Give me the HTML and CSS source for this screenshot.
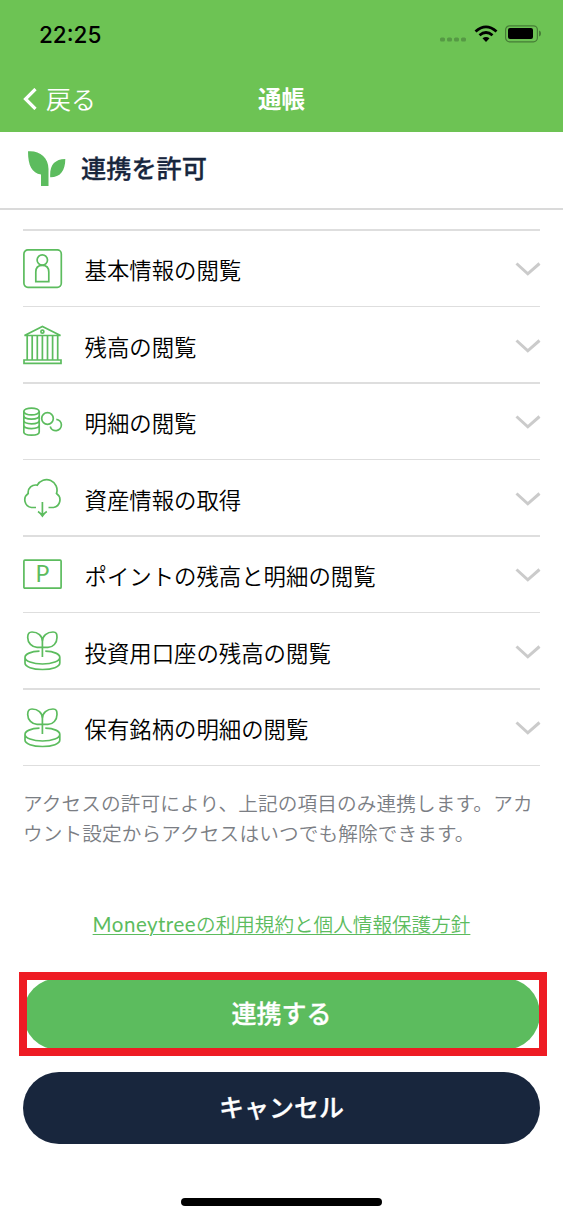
FILE: index.html
```html
<!DOCTYPE html>
<html lang="ja">
<head>
<meta charset="utf-8">
<title>通帳</title>
<link rel="stylesheet" href="styles.css">
</head>
<body>
<svg class="defs" width="0" height="0">
  <symbol id="chevron" viewBox="0 0 26 14"><path d="M1.500 1.500 12.800 11.800 24.500 1.500" fill="none" stroke="#cbcbcb" stroke-width="3"/></symbol>
  <symbol id="plant" viewBox="0 0 40 40">
    <path d="M19.400 26V10.500C19.400 5 15 1 9 1 5.500 1 4.700 3 4.700 6.500 4.700 12 9 16.300 14 16.300H25C30 16.300 34 12 34 6.500 34 3 33.500 1 30 1 24 1 19.400 5 19.400 10.500"/>
    <path d="M16.500 20.200C8 20.500 2 23 2 26.500S9.500 33 19.500 33 36.800 30 36.800 26.500 31 20.500 22.300 20.200M2 26.500V32C2 35.800 9.500 38.500 19.500 38.500S36.800 35.800 36.800 32V26.500"/>
  </symbol>
</svg>
<header class="nav">
  <div class="status">
    <span class="time">22:25</span>
    <div class="signals">
      <svg width="27" height="5" viewBox="0 0 27 5" fill="#559944"><rect width="5" height="4" y=".5" rx="1.500"/><rect x="7" width="5" height="4" y=".5" rx="1.500"/><rect x="14" width="5" height="4" y=".5" rx="1.500"/><rect x="21" width="5" height="4" y=".5" rx="1.500"/></svg>
      <svg class="wifi" width="24" height="18" viewBox="0 0 24 18"><path d="M1.500 6.500Q12-2.800 22.500 6.500M5.500 10.300Q12 4.700 18.500 10.300" fill="none" stroke="#000" stroke-width="2.800"/><path d="M8.500 13.200Q12 10.600 15.500 13.200L12 17Z"/></svg>
      <svg class="battery" width="37" height="18" viewBox="0 0 37 18"><rect x=".6" y=".8" width="31.800" height="16" rx="4" fill="none" stroke="#467d36" stroke-width="1.200"/><rect x="3" y="3" width="25" height="11" rx="2"/><path d="M34 5.500C36.700 6 36.700 11 34 11.500Z" fill="#467d36"/></svg>
    </div>
  </div>
  <div class="bar">
    <a class="back"><svg width="14" height="22" viewBox="0 0 14 22"><path d="M12.500 1 2.500 11 12.500 21" fill="none" stroke="#fff" stroke-width="3.200"/></svg><span>戻る</span></a>
    <h1>通帳</h1>
  </div>
</header>
<section class="heading">
  <svg width="38" height="36" viewBox="0 0 38 36" fill="#5cbc5e"><path d="M0 .3C11-.8 20.500 6 20.500 18V35H13V23.500C4 22 0 15 0 .3ZM37.300 8C26.500 8.300 21.500 14 22.200 26.300 32 26.500 37.300 20 37.300 8Z"/></svg>
  <h2>連携を許可</h2>
</section>
<main>
  <ul class="scopes">
    <li><svg class="icon" viewBox="0 0 40 40"><rect x=".9" y=".9" width="37.400" height="37.400" rx="4"/><circle cx="19.300" cy="11" r="5.200"/><path d="M12.800 32.600V23Q12.800 16.400 19.300 16.400T25.800 23V32.600Z"/></svg><span>基本情報の閲覧</span><svg class="chevron"><use href="#chevron"/></svg></li>
    <li><svg class="icon" viewBox="0 0 40 40"><path d="M1.500 10.500 19.400 1.500 37.500 10.500ZM1 35H38V38.300H1ZM4.200 11V35M9.200 11V35M14.300 11V35M19.400 11V35M24.500 11V35M29.600 11V35M34.700 11V35"/><circle cx="19.400" cy="6.700" r="1.500"/></svg><span>残高の閲覧</span><svg class="chevron"><use href="#chevron"/></svg></li>
    <li><svg class="icon" viewBox="0 0 40 40"><ellipse cx="8.500" cy="9.500" rx="7.700" ry="3.400"/><path d="M.8 9.500V30C.8 34.200 16.200 34.200 16.200 30V9.500M.8 13.500C.8 18.300 16.200 18.300 16.200 13.500M.8 18.200C.8 23 16.200 23 16.200 18.200M.8 23C.8 27.700 16.200 27.700 16.200 23"/><circle cx="24.500" cy="16.500" r="5.800"/><path d="M33.300 17.300A5.700 5.700 0 1 1 27.200 24.500"/></svg><span>明細の閲覧</span><svg class="chevron"><use href="#chevron"/></svg></li>
    <li><svg class="icon" viewBox="0 0 40 40"><path d="M13 29.500H8.500A7.700 7.700 0 0 1 5.200 15.500 7.500 7.500 0 0 1 14.300 7.200 10.500 10.500 0 0 1 33.500 15.500 7.700 7.700 0 0 1 30.500 29.500H25.500M19.400 24V37.500M15 33.500Q17.500 35 19.400 38 21.300 35 23.800 33.500"/></svg><span>資産情報の取得</span><svg class="chevron"><use href="#chevron"/></svg></li>
    <li><svg class="icon" viewBox="0 0 40 40"><rect x=".9" y="5.200" width="37.200" height="28" rx="1"/><text x="12.500" y="26.600">P</text></svg><span>ポイントの残高と明細の閲覧</span><svg class="chevron"><use href="#chevron"/></svg></li>
    <li><svg class="icon"><use href="#plant"/></svg><span>投資用口座の残高の閲覧</span><svg class="chevron"><use href="#chevron"/></svg></li>
    <li><svg class="icon"><use href="#plant"/></svg><span>保有銘柄の明細の閲覧</span><svg class="chevron"><use href="#chevron"/></svg></li>
  </ul>
  <p class="note">アクセスの許可により、上記の項目のみ連携します。アカ<br>ウント設定からアクセスはいつでも解除できます。</p>
  <a class="terms"><span class="latin">Moneytree</span>の利用規約と個人情報保護方針</a>
  <div class="actions">
    <div class="primary"><button>連携する</button><span class="highlight"></span></div>
    <button class="cancel">キャンセル</button>
  </div>
</main>
<footer><span class="home"></span></footer>
</body>
</html>
```
FILE: styles.css
```css
* { box-sizing: border-box; margin: 0; padding: 0; }
body {
  width: 563px; height: 1218px; overflow: hidden;
  display: flex; flex-direction: column;
  background: #fff; color: #000;
  font-family: "Noto Sans CJK JP", sans-serif;
}
.defs { position: absolute; }
svg { display: block; flex: none; }
.nav { height: 132px; background: #6dc354; }
.status { height: 66px; padding: 0 22px 0 39px; display: flex; align-items: center; justify-content: space-between; }
.time { font: 500 22.500px/30px Inter, sans-serif; padding-top: 3px; }
.signals { display: flex; align-items: center; gap: 7px; padding-top: 2px; }
.signals svg:first-child { margin-top: 11px; }
.battery { margin-right: -1px; }
.bar { height: 66px; padding: 0 23px; display: grid; grid-template-columns: 1fr auto 1fr; align-items: center; color: #fff; }
.back { display: flex; align-items: center; gap: 9px; font-size: 25px; font-weight: 350; line-height: 36px; }
.back span { padding-bottom: 2px; }
h1 { font-size: 23.500px; font-weight: 700; line-height: 36px; padding-bottom: 2px; }
.heading { height: 78px; border-bottom: 2px solid #dadada; padding: 0 28px 2px; display: flex; align-items: center; gap: 15px; }
h2 { font-size: 25.200px; font-weight: 500; line-height: 36px; color: #18263d; padding-bottom: 4px; -webkit-text-stroke: .3px #18263d; }
main { padding: 19px 23px 0; display: flex; flex-direction: column; }
.scopes { list-style: none; border-bottom: 1px solid #dedede; }
.scopes li { height: 76px; border-top: 1px solid #dedede; display: flex; align-items: center; font-size: 22.400px; font-weight: 350; line-height: 34px; }
.scopes li:nth-child(odd) { height: 77px; border-top-width: 2px; }
.scopes li span { flex: 1; margin-left: 21.500px; }
.scopes li:nth-child(even) span { padding-top: 2px; }
.icon { width: 40px; height: 40px; fill: none; stroke: #5cbc5e; stroke-width: 1.700; }
.icon text { font: 400 23px Lato, sans-serif; fill: #5cbc5e; stroke: none; }
.chevron { width: 26px; height: 14px; margin: 2px -1px 0 0; }
.scopes li:nth-child(odd) .chevron { margin-top: 0; }
.note { margin-top: 22px; font-size: 19.650px; letter-spacing: .12px; line-height: 30px; font-weight: 350; color: #7b7e84; white-space: nowrap; }
.terms { align-self: center; margin-top: 61px; font-size: 19.600px; line-height: 30px; font-weight: 350; color: #5cbc5e; text-decoration: underline; text-decoration-thickness: 1px; text-underline-offset: 2px; white-space: nowrap; }
.latin { font-family: Lato, sans-serif; font-size: 20.500px; letter-spacing: .5px; font-weight: 400; }
.actions { margin-top: 39px; display: flex; flex-direction: column; gap: 22px; }
.primary { position: relative; }
button { display: block; width: 100%; height: 72px; padding-bottom: 5px; border: 0; border-radius: 36px; background: #5cbc5e; color: #fff; font: 500 25px/36px "Noto Sans CJK JP", sans-serif; -webkit-text-stroke: .3px #fff; }
.cancel { background: #18263d; }
.highlight { position: absolute; top: -6px; left: -4px; width: 528px; height: 84px; border: 8px solid #ee1c24; }
footer { margin-top: auto; padding-bottom: 12px; display: flex; justify-content: center; }
.home { width: 201px; height: 8px; border-radius: 4px; background: #000; }
```
